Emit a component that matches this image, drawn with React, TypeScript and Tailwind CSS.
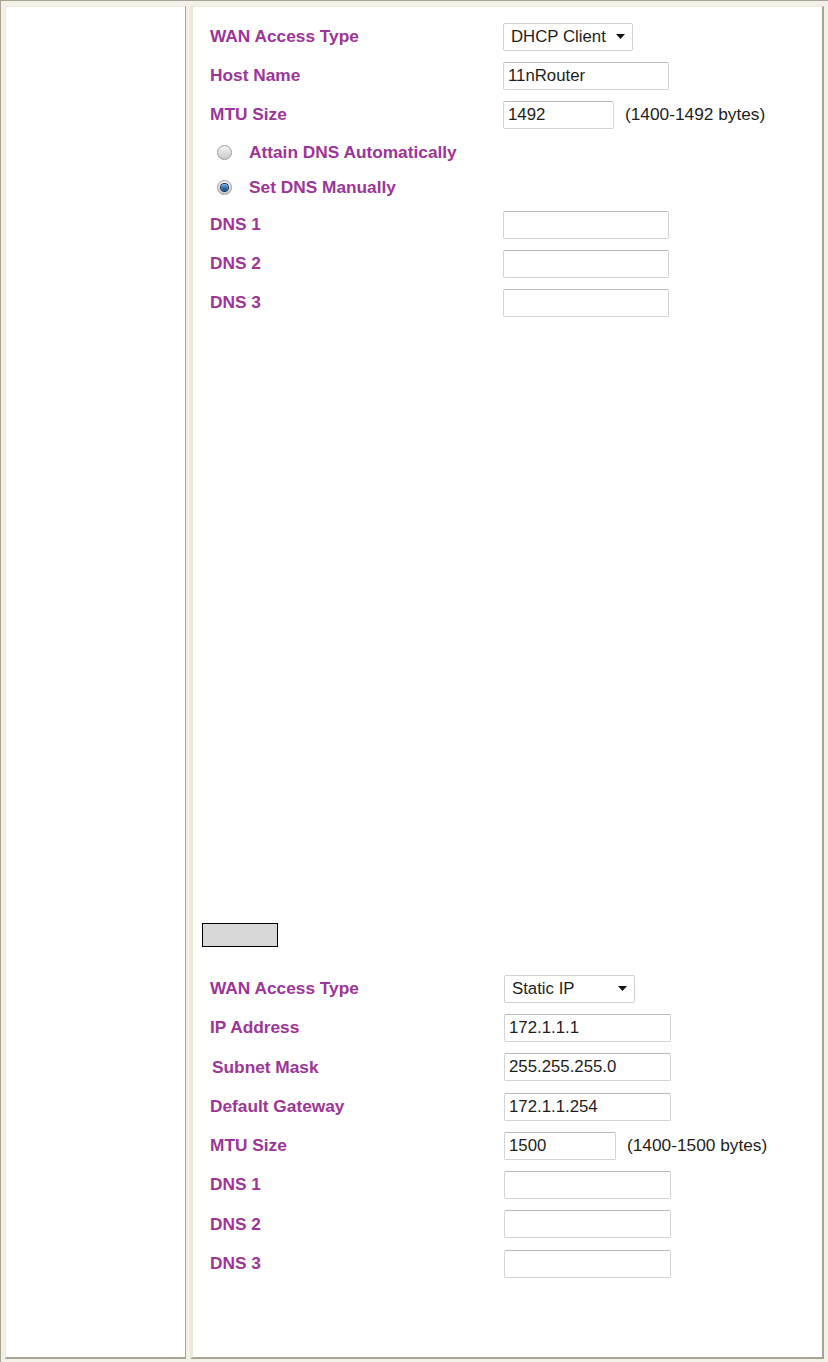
const label = "text-[17.3px] font-bold text-[#9d3498] leading-none";
const field =
  "h-[28px] rounded-[2px] border border-[#d3d3d8] border-t-[#b9b9c0] bg-white px-[4px] text-[16.8px] text-[#1e1e1e] outline-none";

function Select({ value, w }: { value: string; w: string }) {
  return (
    <div
      className={`flex h-[28px] items-center justify-between rounded-[2px] border border-[#cfcfd4] bg-white pl-[7px] pr-[7px] text-[16.8px] text-[#1e1e1e] ${w}`}
    >
      <span>{value}</span>
      <svg width="9" height="5" viewBox="0 0 9 5">
        <path d="M0 0h9L4.5 5z" fill="#111" />
      </svg>
    </div>
  );
}

function Field({ value = "", w = "w-[166px]" }: { value?: string; w?: string }) {
  return <input readOnly value={value} className={`${field} ${w}`} />;
}

function Row({
  name,
  h = "h-[39px]",
  shift = "",
  children,
}: {
  name: string;
  h?: string;
  shift?: string;
  children: React.ReactNode;
}) {
  return (
    <div className={`grid grid-cols-[293px_1fr] items-center ${h}`}>
      <span className={`${label} ${shift}`}>{name}</span>
      <div className="flex items-center">{children}</div>
    </div>
  );
}

function Radio({ checked, text }: { checked?: boolean; text: string }) {
  return (
    <div className="flex h-[35px] items-center pl-[7px]">
      <span className="grid h-[15px] w-[15px] place-items-center rounded-full border border-[#9a9a9a] bg-gradient-to-b from-[#f4f4f4] to-[#c9c9c9]">
        {checked && (
          <span className="h-[7px] w-[7px] rounded-full bg-gradient-to-b from-[#6cb3e8] to-[#12407a] ring-1 ring-[#0d2f57]" />
        )}
      </span>
      <span className={`${label} ml-[17px]`}>{text}</span>
    </div>
  );
}

export default function App() {
  return (
    <div
      className="flex h-[1362px] w-[828px] gap-[4px] border-l border-t border-[#a7a493] bg-[#f3f1e7] pb-[3px] pl-[4px] pr-[4px] pt-[5px]"
      style={{ fontFamily: '"Liberation Sans", Arial, sans-serif' }}
    >
      {/* left menu column, empty */}
      <div className="w-[181px] border-b-2 border-l border-r border-t border-b-[#a7a493] border-l-[#ebe8d8] border-r-[#a7a493] border-t-[#ebe8d8] bg-white" />

      <div className="flex-1 border-b-2 border-l-[3px] border-r-2 border-t border-b-[#a7a493] border-l-[#ebe8d8] border-r-[#a7a493] border-t-[#ebe8d8] bg-white pl-[17px] pt-[10px]">
        {/* DHCP client */}
        <Row name="WAN Access Type">
          <Select value="DHCP Client" w="w-[130px]" />
        </Row>
        <Row name="Host Name">
          <Field value="11nRouter" />
        </Row>
        <Row name="MTU Size">
          <Field value="1492" w="w-[111px]" />
          <span className="ml-[11px] text-[17.3px] text-[#1e1e1e]">(1400-1492 bytes)</span>
        </Row>
        <div className="mt-[1px]">
          <Radio text="Attain DNS Automatically" />
          <Radio checked text="Set DNS Manually" />
        </div>
        <Row name="DNS 1">
          <Field />
        </Row>
        <Row name="DNS 2">
          <Field />
        </Row>
        <Row name="DNS 3">
          <Field />
        </Row>

        <div className="ml-[-8px] mt-[601px] h-[24px] w-[76px] border border-black bg-[#d8d8d8]" />

        {/* static IP */}
        <div className="mt-[22px]">
          <Row name="WAN Access Type" h="h-[39.3px]">
            <div className="ml-[1px]">
              <Select value="Static IP" w="w-[131px]" />
            </div>
          </Row>
          <Row name="IP Address" h="h-[39.3px]">
            <div className="ml-[1px]">
              <Field value="172.1.1.1" w="w-[167px]" />
            </div>
          </Row>
          <Row name="Subnet Mask" h="h-[39.3px]" shift="pl-[2px]">
            <div className="ml-[1px]">
              <Field value="255.255.255.0" w="w-[167px]" />
            </div>
          </Row>
          <Row name="Default Gateway" h="h-[39.3px]">
            <div className="ml-[1px]">
              <Field value="172.1.1.254" w="w-[167px]" />
            </div>
          </Row>
          <Row name="MTU Size" h="h-[39.3px]">
            <div className="ml-[1px] flex items-center">
              <Field value="1500" w="w-[112px]" />
              <span className="ml-[11px] text-[17.3px] text-[#1e1e1e]">(1400-1500 bytes)</span>
            </div>
          </Row>
          <Row name="DNS 1" h="h-[39.3px]">
            <div className="ml-[1px]">
              <Field w="w-[167px]" />
            </div>
          </Row>
          <Row name="DNS 2" h="h-[39.3px]">
            <div className="ml-[1px]">
              <Field w="w-[167px]" />
            </div>
          </Row>
          <Row name="DNS 3" h="h-[39.3px]">
            <div className="ml-[1px]">
              <Field w="w-[167px]" />
            </div>
          </Row>
        </div>
      </div>
    </div>
  );
}
